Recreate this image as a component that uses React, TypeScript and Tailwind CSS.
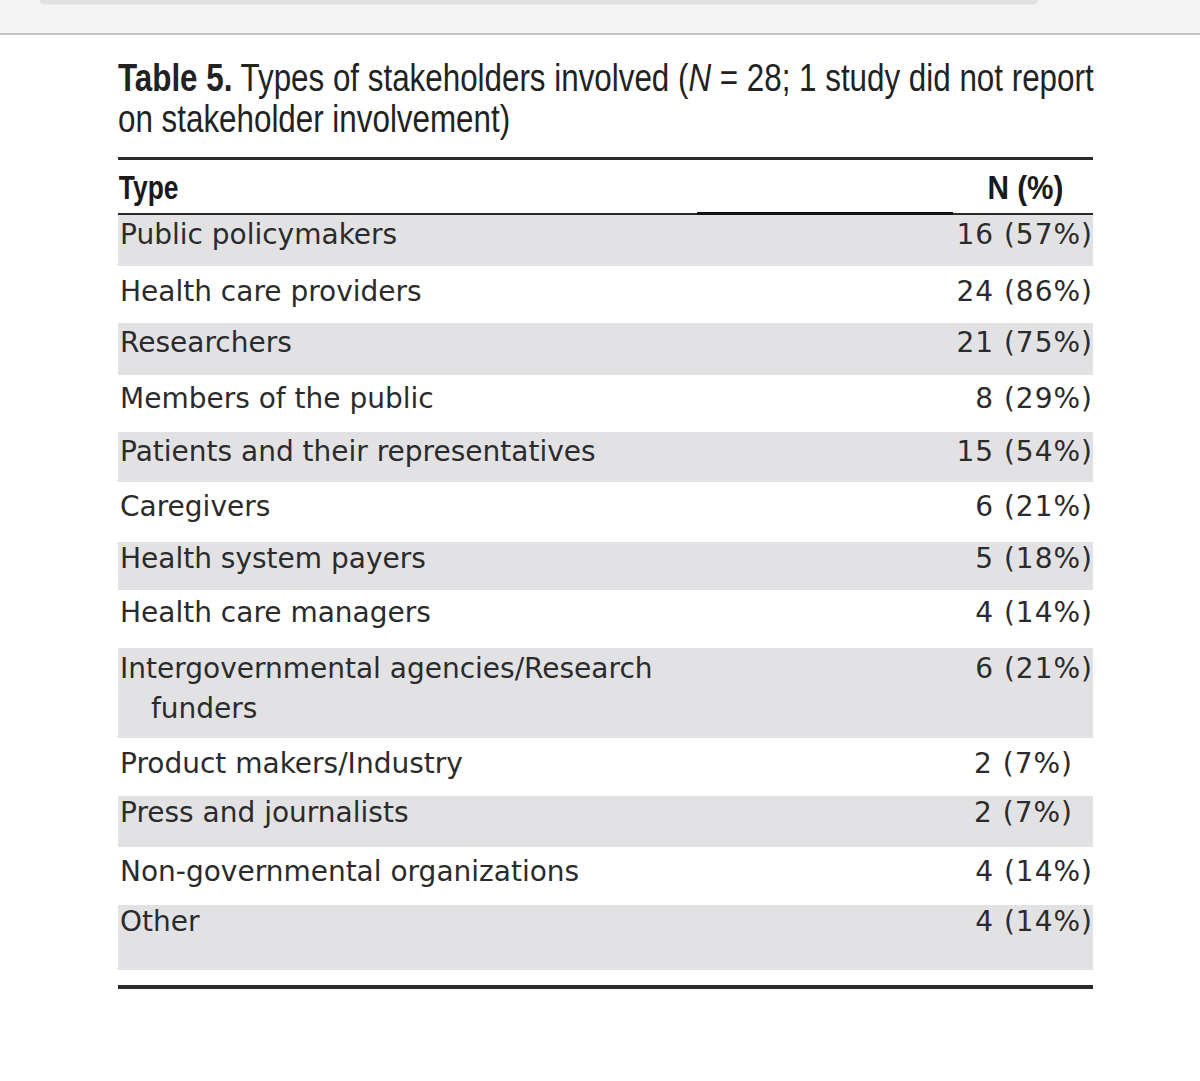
import React from "react";

type Row = { label: React.ReactNode; value: string; h: number; pt: number; gray: boolean; pr?: number; lh?: number };

const rows: Row[] = [
  { label: "Public policymakers", value: "16 (57%)", h: 51, pt: 3, gray: true },
  { label: "Health care providers", value: "24 (86%)", h: 57, pt: 9, gray: false },
  { label: "Researchers", value: "21 (75%)", h: 52, pt: 3, gray: true },
  { label: "Members of the public", value: "8 (29%)", h: 57, pt: 7, gray: false },
  { label: "Patients and their representatives", value: "15 (54%)", h: 50, pt: 3, gray: true },
  { label: "Caregivers", value: "6 (21%)", h: 60, pt: 8, gray: false },
  { label: "Health system payers", value: "5 (18%)", h: 48, pt: 0, gray: true },
  { label: "Health care managers", value: "4 (14%)", h: 58, pt: 6, gray: false },
  {
    label: (
      <>
        <div>Intergovernmental agencies/Research</div>
        <div className="pl-[31px]">funders</div>
      </>
    ),
    value: "6 (21%)",
    h: 90,
    pt: 1,
    gray: true,
    lh: 40,
  },
  { label: "Product makers/Industry", value: "2 (7%)", h: 58, pt: 9, gray: false, pr: 20 },
  { label: "Press and journalists", value: "2 (7%)", h: 51, pt: 0, gray: true, pr: 20 },
  { label: "Non-governmental organizations", value: "4 (14%)", h: 58, pt: 8, gray: false },
  { label: "Other", value: "4 (14%)", h: 65, pt: 0, gray: true },
];

const narrow = { fontFamily: '"Liberation Sans", Arial, sans-serif' };
const body = { fontFamily: '"DejaVu Sans", "Liberation Sans", sans-serif' };

export default function App() {
  return (
    <div className="min-h-[1081px] w-[1200px] overflow-hidden bg-white">
      <div className="h-[33px] bg-[#f4f4f4] pl-[40px] pr-[162px]">
        <div className="h-[5px] rounded-b-[10px] bg-[#e0e0e0] border-b border-[#ebebeb]" />
      </div>
      <div className="h-[2px] bg-[#c3c3c3]" />
      <div className="ml-[118px] w-[975px] pt-[23px]">
        <div className="origin-left scale-x-[0.825] text-[38px] leading-[41px] text-[#222] whitespace-nowrap" style={narrow}>
          <div>
            <span className="font-bold">Table 5.</span> Types of stakeholders involved (<span className="italic">N</span> = 28; 1 study did not report
          </div>
          <div>on stakeholder involvement)</div>
        </div>
        <div className="mt-[17px] h-[3px] bg-[#2a2a2a]" />
        <div className="flex h-[53px] items-start justify-between pt-[11px] text-[33px] leading-[34px] font-bold text-[#1a1a1a]" style={narrow}>
          <div className="origin-left scale-x-[0.8] pl-[1px]">Type</div>
          <div className="mr-[30px] origin-right scale-x-[0.9]">N (%)</div>
        </div>
        <div className="relative h-[2px] bg-[#2a2a2a]">
          <div className="absolute left-[579px] top-[-1px] h-[3px] w-[256px] bg-[#111]" />
        </div>
        <div style={body} className="text-[28px] leading-[34px] text-[#2b2b2b]">
          {rows.map((r, i) => (
            <div
              key={i}
              className={`flex items-start justify-between ${r.gray ? "bg-[#e2e2e4]" : "bg-white"}`}
              style={{ height: r.h, paddingTop: r.pt, lineHeight: r.lh ? `${r.lh}px` : undefined }}
            >
              <div className="pl-[2px]">{r.label}</div>
              <div className="whitespace-nowrap tracking-[1px]" style={{ paddingRight: r.pr ?? 0 }}>
                {r.value}
              </div>
            </div>
          ))}
        </div>
        <div className="mt-[15px] h-[4px] bg-[#2a2a2a]" />
      </div>
    </div>
  );
}
